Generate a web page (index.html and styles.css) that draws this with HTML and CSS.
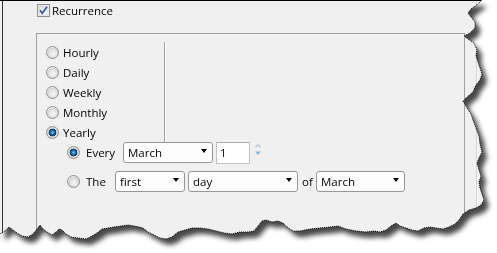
FILE: index.html
```html
<!DOCTYPE html>
<html lang="en">
<head>
  <meta charset="UTF-8">
  <title>Recurrence</title>
  <link rel="stylesheet" href="styles.css">
</head>
<body>

  <!-- torn paper outline, shared by the clip and the dotted edge -->
  <svg class="defs" width="0" height="0">
    <defs>
      <polygon id="torn-shape" points="-2,-2 484,-2 478,4 471,9 468,13 471,17 475,22 475,28 470,33 464,36 468,39 474,43 477,50 476,56 478,62 480,68 482,74 480,80 476,85 473,92 466,98 463,101 467,108 471,114 473,120 476,128 479,136 480,144 482,152 479,158 477,163 479,170 481,176 479,182 480,188 482,194 484,200 481,205 476,208 469,210 463,214 459,220 455,224 449,227 443,229 436,228 430,227 424,228 418,231 412,230 406,228 400,226 396,223 391,226 386,230 380,232 374,231 366,232 356,231 346,229 338,226 330,227 320,228 310,229 300,231 293,231 287,227 283,223 278,221 272,222 266,220 262,221 258,226 254,231 248,232 240,232 232,234 224,233 216,231 208,229 200,228 192,228 185,230 178,232 172,237 166,239 160,238 154,235 148,232 143,228 139,227 134,226 128,225 121,226 114,227 108,228 102,229 97,233 92,236 86,239 78,238 71,237 66,234 62,230 59,229 56,232 52,235 47,232 43,229 40,225 37,229 33,234 28,237 22,236 17,233 13,230 9,227 5,231 2,233 -2,234"/>
      <clipPath id="torn" clipPathUnits="userSpaceOnUse">
        <use href="#torn-shape"/>
      </clipPath>
    </defs>
  </svg>

  <div class="sheet">
    <div class="paper">

      <div class="recurrence">
        <svg class="check" width="13" height="13" viewBox="0 0 13 13">
          <defs>
            <linearGradient id="box-fill" x1="0" y1="0" x2="1" y2="1">
              <stop offset="0" stop-color="#dcdcdc"/>
              <stop offset="1" stop-color="#fbfbfb"/>
            </linearGradient>
          </defs>
          <rect x="0.5" y="0.5" width="12" height="12" fill="#f4f4f4" stroke="#8e8f8f"/>
          <rect x="2" y="2" width="9" height="9" fill="url(#box-fill)" stroke="#c4c4c4" stroke-width="0.5"/>
          <path d="M3 6.2 L5.3 9.3 L10 2.8" fill="none" stroke="#3a5c9c" stroke-width="1.7"/>
        </svg>
        <span>Recurrence</span>
      </div>

      <div class="group">
        <div class="freq-list">
          <div class="opt"><span class="radio"></span>Hourly</div>
          <div class="opt"><span class="radio"></span>Daily</div>
          <div class="opt"><span class="radio"></span>Weekly</div>
          <div class="opt"><span class="radio"></span>Monthly</div>
          <div class="opt"><span class="radio on"></span>Yearly</div>
        </div>

        <div class="yearly">
          <div class="yearly-row">
            <span class="radio on"></span>
            <span class="lbl-every">Every</span>
            <div class="combo combo-month">March</div>
            <div class="num">1</div>
            <svg class="spin" width="10" height="21" viewBox="0 0 10 21">
              <path d="M2.5 5.5 L5 2.5 L7.5 5.5" fill="none" stroke="#7fb0de" stroke-width="1"/>
              <polygon points="2,9.5 8,9.5 5,13" fill="#86b8e4"/>
            </svg>
          </div>
          <div class="yearly-row">
            <span class="radio"></span>
            <span class="lbl-the">The</span>
            <div class="combo combo-first">first</div>
            <div class="combo combo-day">day</div>
            <span class="lbl-of">of</span>
            <div class="combo combo-month2">March</div>
          </div>
        </div>
      </div>

    </div>
  </div>

  <svg class="edge" width="497" height="253"><use href="#torn-shape"/></svg>

</body>
</html>
```

FILE: styles.css
```css
body {
  margin: 0;
  position: relative;
  background: #fff;
  font-family: "Open Sans", "Liberation Sans", sans-serif;
  font-size: 11.5px;
  color: #000;
}
.defs {
  position: absolute;
}

/* paper + shadow */
.sheet {
  width: 497px;
  height: 253px;
  filter: drop-shadow(5px 6px 2.5px rgba(0, 0, 0, 0.72));
}
.paper {
  box-sizing: border-box;
  width: 497px;
  height: 253px;
  padding: 3px 0 0 36px;
  border-top: 1px solid #000;
  background: linear-gradient(to right, #f0f0f0 0 2px, #333 2px 3px, #f0f0f0 3px 476px, #d4d4d4 476px 477px, #fafafa 477px 478px, #f0f0f0 478px);
  clip-path: url(#torn);
}
.edge {
  position: absolute;
  top: 0;
  left: 0;
  fill: none;
  stroke: #000;
  stroke-width: 1;
  stroke-dasharray: 1 1;
}

/* header checkbox */
.recurrence {
  display: flex;
  align-items: center;
  height: 13px;
  margin-left: 1px;
}
.check {
  margin-right: 2px;
}

/* group box */
.group {
  box-sizing: border-box;
  width: 429px;
  height: 230px;
  margin-top: 16px;
  border: 1px solid #a0a0a0;
}
.freq-list {
  box-sizing: border-box;
  width: 128px;
  margin-top: 8px;
  padding-left: 9px;
  border-right: 1px solid #a0a0a0;
  box-shadow: 1px 0 0 #fff;
}
.opt {
  display: flex;
  align-items: center;
  height: 20px;
}

.radio {
  box-sizing: border-box;
  width: 13px;
  height: 13px;
  margin-right: 4px;
  border-radius: 50%;
  border: 1px solid #8f8f8f;
  background: radial-gradient(circle at 55% 60%, #f6f6f6 0, #e6e6e6 3px, #d2d2d2 5.5px, #f0f0f0 6px);
  flex: none;
}
.radio.on {
  background: radial-gradient(circle at 50% 50%, #7cccf5 0, #2c86c8 1.5px, #124a7c 3px, #1b3550 3.6px, #e4e4e4 4.2px, #d2d2d2 5.5px, #f0f0f0 6px);
}

/* yearly sub options */
.yearly {
  display: flex;
  flex-direction: column;
  gap: 8px;
  padding-left: 30px;
}
.yearly-row {
  display: flex;
  align-items: center;
  height: 21px;
}
.yearly-row .radio {
  margin-right: 6px;
}
.lbl-every {
  width: 37px;
}
.lbl-the {
  width: 29px;
}
.lbl-of {
  width: 14px;
  margin-left: 4px;
}

.combo {
  box-sizing: border-box;
  display: flex;
  align-items: center;
  justify-content: space-between;
  height: 21px;
  padding: 0 5px 0 4px;
  border: 1px solid #979797;
  border-radius: 3px;
  background: #fdfdfd;
}
.combo::after {
  content: "";
  width: 0;
  height: 0;
  margin-top: -3px;
  border-left: 3.5px solid transparent;
  border-right: 3.5px solid transparent;
  border-top: 4px solid #000;
}
.combo-month {
  width: 90px;
}
.combo-first {
  width: 70px;
}
.combo-day {
  width: 110px;
  margin-left: 3px;
}
.combo-month2 {
  width: 89px;
}

.num {
  box-sizing: border-box;
  width: 34px;
  height: 22px;
  margin-left: 3px;
  padding-left: 3px;
  line-height: 20px;
  border: 1px solid #c2c2c2;
  border-top-color: #adadad;
  background: #fff;
}
.spin {
  margin-left: 3px;
}
```
